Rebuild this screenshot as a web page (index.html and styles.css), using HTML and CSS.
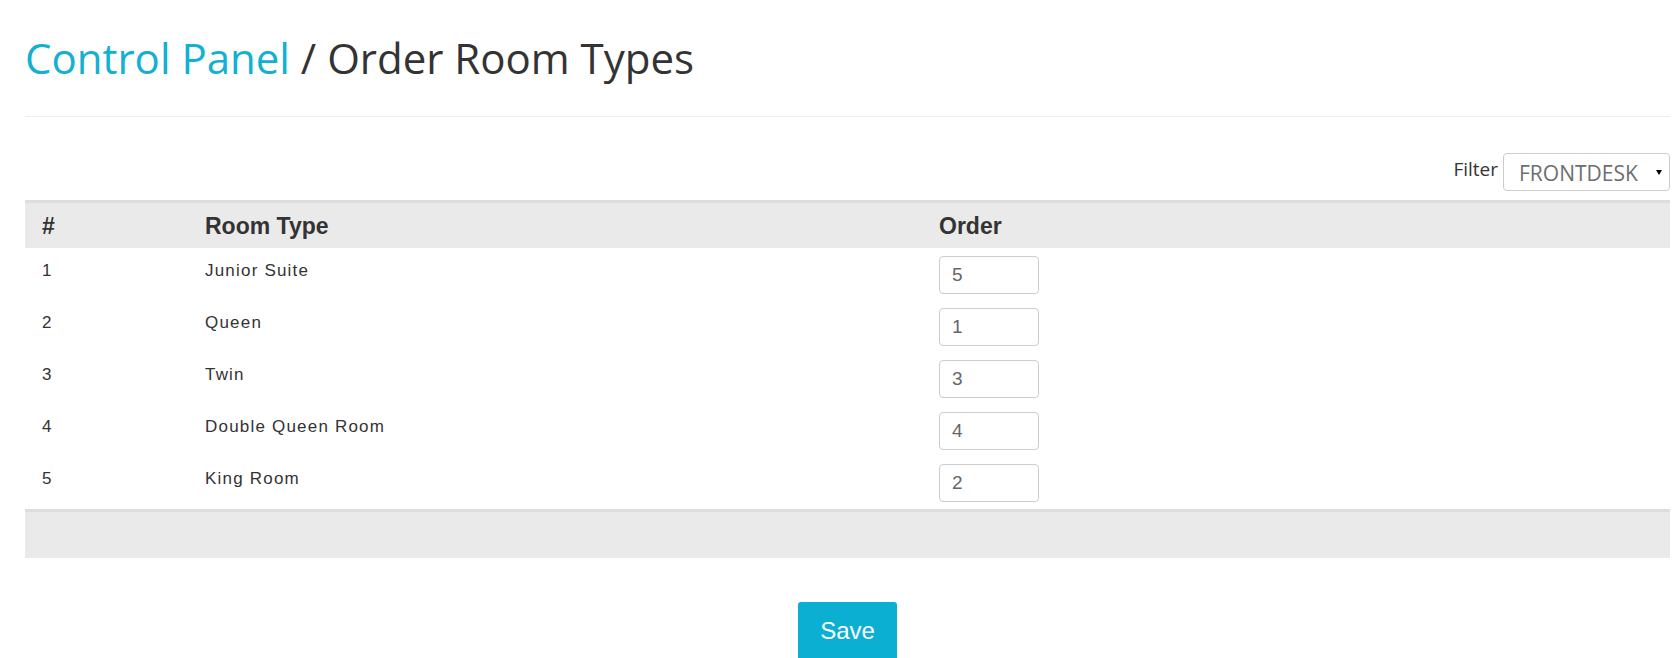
FILE: index.html
```html
<!DOCTYPE html>
<html lang="en">
<head>
<meta charset="utf-8">
<title>Order Room Types</title>
<link rel="stylesheet" href="styles.css">
</head>
<body>
<div class="page">
  <div class="page-header">
    <h1 class="title"><a class="crumb" href="#">Control Panel</a> / Order Room Types</h1>
  </div>

  <div class="filter-row">
    <label class="filter-label" for="filter">Filter</label>
    <div class="select-wrap">
      <select id="filter" class="filter-select">
        <option>FRONTDESK</option>
      </select>
    </div>
  </div>

  <table class="order-table">
    <colgroup>
      <col class="col-num">
      <col class="col-type">
      <col class="col-order">
    </colgroup>
    <thead>
      <tr><th>#</th><th>Room Type</th><th>Order</th></tr>
    </thead>
    <tbody>
      <tr><td class="txt">1</td><td class="txt">Junior Suite</td><td class="inp"><input class="order-input" type="text" value="5"></td></tr>
      <tr><td class="txt">2</td><td class="txt">Queen</td><td class="inp"><input class="order-input" type="text" value="1"></td></tr>
      <tr><td class="txt">3</td><td class="txt">Twin</td><td class="inp"><input class="order-input" type="text" value="3"></td></tr>
      <tr><td class="txt">4</td><td class="txt">Double Queen Room</td><td class="inp"><input class="order-input" type="text" value="4"></td></tr>
      <tr class="last"><td class="txt">5</td><td class="txt">King Room</td><td class="inp"><input class="order-input" type="text" value="2"></td></tr>
    </tbody>
    <tfoot>
      <tr><td colspan="3"></td></tr>
    </tfoot>
  </table>

  <div class="actions">
    <button class="save-btn" type="button">Save</button>
  </div>
</div>
</body>
</html>
```

FILE: styles.css
```css
html, body {
  margin: 0;
  padding: 0;
  background: #fff;
}

body {
  font-family: "Liberation Sans", Arial, sans-serif;
  color: #333;
}

.page {
  padding: 0 6px 0 25px;
}

.page-header {
  padding-top: 35px;
  padding-bottom: 35px;
  border-bottom: 1px solid #eeeeee;
}

.title {
  margin: 0;
  font-family: "Open Sans", sans-serif;
  font-weight: 400;
  font-size: 42px;
  line-height: 46px;
  color: #333;
}

.crumb {
  color: #12b0d3;
  text-decoration: none;
}

.filter-row {
  display: flex;
  justify-content: flex-end;
  align-items: center;
  gap: 5px;
  margin-top: 36px;
}

.filter-label {
  font-family: "Open Sans", sans-serif;
  font-size: 19px;
  color: #333;
  line-height: 24px;
  margin-top: -6px;
}

.select-wrap {
  position: relative;
}

.select-wrap::after {
  content: "";
  position: absolute;
  right: 8px;
  top: 17px;
  border-left: 3px solid transparent;
  border-right: 3px solid transparent;
  border-top: 5px solid #000;
  pointer-events: none;
}

.filter-select {
  -webkit-appearance: none;
  appearance: none;
  width: 167px;
  height: 38px;
  box-sizing: border-box;
  border: 1px solid #cccccc;
  border-radius: 4px;
  background: #fff;
  padding: 2px 0 0 15px;
  font-family: "Open Sans", sans-serif;
  font-size: 21px;
  color: #6e6e6e;
  line-height: 34px;
}

.order-table {
  width: 100%;
  margin-top: 9px;
  border-collapse: collapse;
  table-layout: fixed;
}

.col-num { width: 163px; }
.col-type { width: 734px; }

.order-table thead th {
  background: #eaeaea;
  border-top: 3px solid #dddddd;
  text-align: left;
  font-size: 23px;
  font-weight: bold;
  color: #333;
  padding: 2px 17px 0;
  line-height: 43px;
  vertical-align: top;
}

.order-table tbody td {
  vertical-align: top;
  padding: 0 17px;
  color: #333;
}

.order-table td.txt {
  font-size: 17px;
  letter-spacing: 1.2px;
  line-height: 22px;
  padding-top: 12px;
}

.order-table td.inp {
  padding-top: 8px;
  padding-bottom: 6px;
  height: 38px;
}

.order-table tr.last td.inp {
  padding-bottom: 7px;
}

.order-input {
  display: block;
  width: 100px;
  height: 38px;
  box-sizing: border-box;
  border: 1px solid #cccccc;
  border-radius: 4px;
  padding: 0 12px;
  font-family: "Liberation Sans", Arial, sans-serif;
  font-size: 19px;
  color: #666;
  background: #fff;
}

.order-table tfoot td {
  background: #eaeaea;
  border-top: 3px solid #dddddd;
  height: 46px;
  padding: 0;
}

.actions {
  display: flex;
  justify-content: center;
  margin-top: 44px;
}

.save-btn {
  background: #0aafd2;
  color: #fff;
  border: none;
  border-radius: 3px 3px 0 0;
  font-family: "Liberation Sans", Arial, sans-serif;
  font-size: 24px;
  line-height: 34px;
  padding: 12px 22px;
  cursor: pointer;
}
```
